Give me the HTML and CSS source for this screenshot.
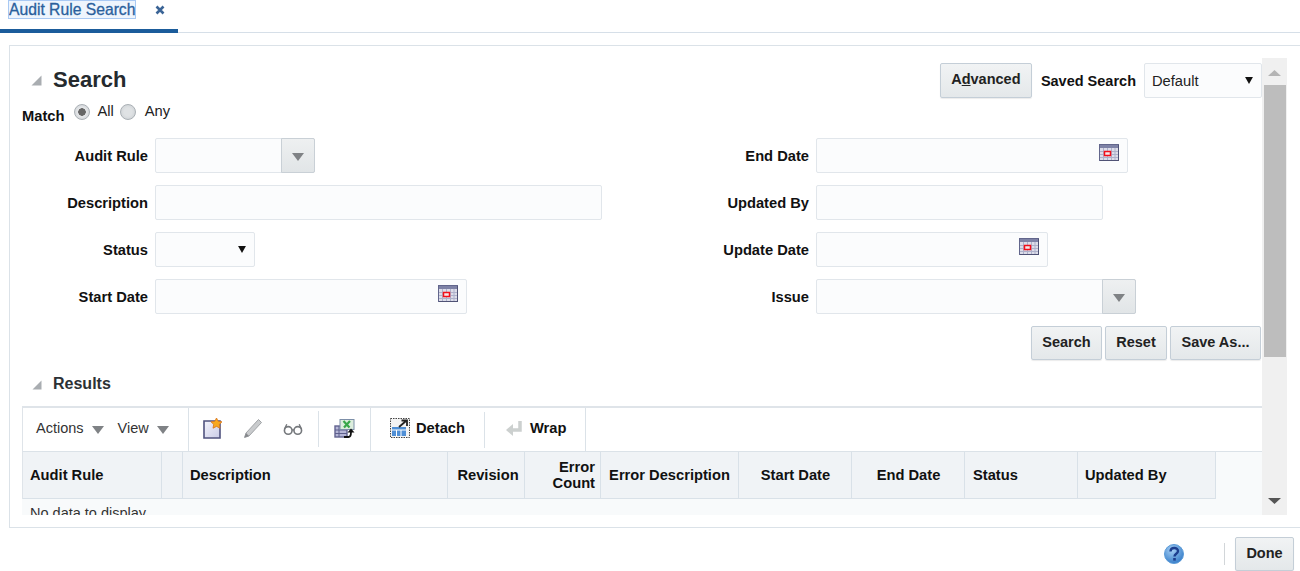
FILE: index.html
```html
<!DOCTYPE html>
<html lang="en">
<head>
<meta charset="utf-8">
<title>Audit Rule Search</title>
<link rel="stylesheet" href="styles.css">
</head>
<body>
<svg class="defs" width="0" height="0" aria-hidden="true">
  <defs>
    <symbol id="cal" viewBox="0 0 20 17">
      <rect x="0.5" y="0.5" width="19" height="16" fill="#dcdde9" stroke="#62668c"/>
      <rect x="1" y="1" width="18" height="3" fill="#7e82a6"/>
      <path d="M1 7.500h18M1 10.500h18M1 13.500h18M4.500 4v12M8.500 4v12M12.500 4v12M16 4v12" stroke="#aeb1cb" stroke-width="1"/>
      <path d="M19.500 1v16M1 16.500h19" stroke="#4f5275" stroke-width="1"/>
      <rect x="5.500" y="7.500" width="6" height="4" fill="#f7e8ea" stroke="#f20e1a" stroke-width="1.500"/>
    </symbol>
    <symbol id="down" viewBox="0 0 14 10">
      <path d="M1 1h12L7 9z" fill="#7f8285"/>
    </symbol>
  </defs>
</svg>

<header class="tabs">
  <div class="tab">
    <span class="tab-title">Audit Rule Search</span>
    <svg class="tab-close" width="10" height="10" viewBox="0 0 10 10"><path d="M1.500 1.500l7 7M8.500 1.500l-7 7" stroke="#3a6496" stroke-width="2.600"/></svg>
  </div>
</header>

<main class="panel">
  <div class="content">
    <section class="search">
      <div class="search-head">
        <svg class="disclosure big" width="11" height="11" viewBox="0 0 11 11"><path d="M10.500 0.500v10H0.500z" fill="#a9adb1"/></svg>
        <h1>Search</h1>
        <div class="head-tools">
          <button class="btn adv" type="button">A<u>d</u>vanced</button>
          <span class="lbl saved-lbl">Saved Search</span>
          <div class="field choice saved"><span>Default</span><svg width="8" height="7" viewBox="0 0 9 8"><path d="M0 0h9L4.500 8z" fill="#111"/></svg></div>
        </div>
      </div>

      <div class="match">
        <span class="lbl">Match</span>
        <span class="radio on"></span><span class="opt">All</span>
        <span class="radio"></span><span class="opt">Any</span>
      </div>

      <div class="form">
        <div class="col">
          <div class="row"><span class="lbl">Audit Rule</span>
            <div class="field combo w160"><span class="combo-btn"><svg width="14" height="10"><use href="#down"/></svg></span></div></div>
          <div class="row"><span class="lbl">Description</span><div class="field w447"></div></div>
          <div class="row"><span class="lbl">Status</span>
            <div class="field choice w100"><span></span><svg width="8" height="7" viewBox="0 0 9 8"><path d="M0 0h9L4.500 8z" fill="#111"/></svg></div></div>
          <div class="row"><span class="lbl">Start Date</span>
            <div class="field date w312"><svg width="20" height="17"><use href="#cal"/></svg></div></div>
        </div>
        <div class="col">
          <div class="row"><span class="lbl">End Date</span>
            <div class="field date w312"><svg width="20" height="17"><use href="#cal"/></svg></div></div>
          <div class="row"><span class="lbl">Updated By</span><div class="field w287"></div></div>
          <div class="row"><span class="lbl">Update Date</span>
            <div class="field date w232"><svg width="20" height="17"><use href="#cal"/></svg></div></div>
          <div class="row"><span class="lbl">Issue</span>
            <div class="field combo w320"><span class="combo-btn"><svg width="14" height="10"><use href="#down"/></svg></span></div></div>
        </div>
      </div>

      <div class="actions">
        <button class="btn b-search" type="button">Search</button>
        <button class="btn b-reset" type="button">Reset</button>
        <button class="btn b-save" type="button">Save As...</button>
      </div>
    </section>

    <section class="results">
      <div class="results-head">
        <svg class="disclosure" width="10" height="10" viewBox="0 0 10 10"><path d="M9.500 0.500v9H0.500z" fill="#a9adb1"/></svg>
        <h2>Results</h2>
      </div>
      <div class="toolbar">
        <div class="tb-group menus">
          <span class="menu">Actions<svg width="14" height="10" viewBox="0 0 14 10"><use href="#down"/></svg></span>
          <span class="menu">View<svg width="14" height="10" viewBox="0 0 14 10"><use href="#down"/></svg></span>
        </div>
        <div class="tb-group icons">
          <svg width="20" height="21" viewBox="0 0 20 21"><defs><linearGradient id="pg" x1="0" y1="0" x2="1" y2="1"><stop offset="0" stop-color="#f4f4fc"/><stop offset="1" stop-color="#c9cbe6"/></linearGradient></defs><path d="M1 3h16v17H1z" fill="url(#pg)" stroke="#50537f" stroke-width="1.600"/><path d="M13.500 0l1.700 3.300 3.800.5-2.700 2.600.7 3.800-3.500-1.800-3.500 1.800.7-3.800L8 3.800l3.800-.5z" fill="#f7a81f" stroke="#d8741a" stroke-width=".8"/></svg>
          <svg width="20" height="21" viewBox="0 0 20 21"><path d="M15.500 1.500l3 3L6 18l-4.500 1.500L3 15z" fill="#c9cbcd" stroke="#a0a3a6"/><path d="M3 15l3 3-4.500 1.500z" fill="#85888b"/></svg>
          <svg width="20" height="21" viewBox="0 0 21 21"><circle cx="5.500" cy="12.500" r="4" fill="#fff" stroke="#75787c" stroke-width="1.700"/><circle cx="15.500" cy="12.500" r="4" fill="#fff" stroke="#75787c" stroke-width="1.700"/><path d="M1.500 11l2.500-5M19.500 11L17 6M9.500 12h2" fill="none" stroke="#75787c" stroke-width="1.400"/></svg>
          <span class="tb-sep"></span>
          <svg width="21" height="21" viewBox="0 0 21 21"><rect x="1" y="8" width="12" height="11" fill="#b5b6d6" stroke="#62638f" stroke-width="1.400"/><path d="M1 12h12M1 15.500h12M5 8v11" stroke="#5d5f8c"/><rect x="6" y="1.500" width="14" height="10" fill="#dceddd" stroke="#7d8fa8"/><path d="M9.500 3l6 6.500M16 3l-6 6.500" stroke="#38a749" stroke-width="2.200"/><path d="M10 19h4.500c2 0 2.500-1.500 2.500-5" fill="none" stroke="#111" stroke-width="1.800"/><path d="M13.500 14.500h7L17 10.500z" fill="#111"/></svg>
        </div>
        <div class="tb-group tool detach">
          <svg width="20" height="20" viewBox="0 0 20 20"><rect x=".5" y=".5" width="19" height="19" fill="#f3f3f3" stroke="#444" stroke-dasharray="1.500 1"/><rect x="2" y="9" width="14" height="9" fill="#4f8fd6"/><path d="M2 12h14M6.500 12v6M11 12v6" stroke="#fff"/><path d="M9 9l7-6M11.500 2.500H17V8" fill="none" stroke="#222" stroke-width="1.800"/></svg>
          <span>Detach</span>
        </div>
        <span class="tb-inner-sep"></span>
        <div class="tb-group tool wrap">
          <svg width="16" height="16" viewBox="0 0 16 16"><path d="M14 1v9H6" fill="none" stroke="#ccd0cf" stroke-width="3.500"/><path d="M7 4v12L0 10z" fill="#ccd0cf"/></svg>
          <span>Wrap</span>
        </div>
      </div>
      <div class="thead">
        <div class="th c1">Audit Rule</div>
        <div class="th c2"></div>
        <div class="th c3">Description</div>
        <div class="th c4 ctr">Revision</div>
        <div class="th c5">Error<br>Count</div>
        <div class="th c6 ctr">Error Description</div>
        <div class="th c7 ctr">Start Date</div>
        <div class="th c7 ctr">End Date</div>
        <div class="th c7 st">Status</div>
        <div class="th c8">Updated By</div>
      </div>
      <div class="tbody">No data to display.</div>
    </section>
  </div>

  <aside class="scrollbar">
    <div class="sb-arrow"><svg width="13" height="6" viewBox="0 0 14 8" preserveAspectRatio="none"><path d="M0 8h14L7 0z" fill="#b4b4b4"/></svg></div>
    <div class="sb-thumb"></div>
    <div class="sb-track"></div>
    <div class="sb-arrow low"><svg width="13" height="6" viewBox="0 0 14 8" preserveAspectRatio="none"><path d="M0 0h14L7 8z" fill="#555"/></svg></div>
  </aside>
</main>

<footer class="foot">
  <svg class="help" width="22" height="22" viewBox="0 0 22 22">
    <defs><radialGradient id="hg" cx=".4" cy=".3" r=".8"><stop offset="0" stop-color="#a6d0f5"/><stop offset="1" stop-color="#2a74c4"/></radialGradient></defs>
    <circle cx="11" cy="11" r="9.500" fill="url(#hg)" stroke="#5b9bd8"/>
    <path d="M7.500 8.500c0-4.500 7.500-4.500 7.500-.5 0 3-3.500 2.500-3.500 5.500" fill="none" stroke="#1d3f8f" stroke-width="2.400"/>
    <rect x="10.200" y="15" width="2.600" height="2.600" fill="#1d3f8f"/>
  </svg>
  <span class="foot-sep"></span>
  <button class="btn done" type="button">Done</button>
</footer>
</body>
</html>
```

FILE: styles.css
```css
* { box-sizing: border-box; }
html, body { margin: 0; padding: 0; }
body {
  width: 1300px;
  height: 571px;
  overflow: hidden;
  background: #fff;
  color: #111;
  font-family: "Liberation Sans", Arial, sans-serif;
  font-size: 14.700px;
}
.defs { display: block; height: 0; }

.tabs { height: 33px; border-bottom: 1px solid #d6dfe8; }
.tab {
  width: 178px;
  height: 33px;
  border-bottom: 4px solid #1b5c9b;
  padding: 1px 0 0 9px;
  display: flex;
  align-items: flex-start;
  gap: 20px;
}
.tab-title {
  height: 17px;
  line-height: 18px;
  color: #2a5f9c;
  font-size: 15.700px;
  background: #eef5fd;
  outline: 1px solid #a9c9f3;
  -webkit-text-stroke: .3px #2a5f9c;
}
.tab-close { margin-top: 4px; }

.panel {
  margin: 12px 0 0 9px;
  height: 483px;
  border-top: 1px solid #dbe2e8;
  border-left: 1px solid #dbe2e8;
  border-bottom: 1px solid #dbe2e8;
  padding-top: 12px;
  display: flex;
  align-items: flex-start;
}
.content {
  width: 1252px;
  height: 457px;
  overflow: hidden;
  padding: 5px 0 0 12px;
}

.btn {
  font-family: inherit;
  font-size: 14.500px;
  font-weight: bold;
  color: #222;
  height: 35px;
  padding: 0;
  border: 1px solid #c4ced7;
  border-radius: 2px;
  background: linear-gradient(#f1f3f4, #e4e8ea);
  box-shadow: 0 1px 1px rgba(0,0,0,.08);
}

.search-head { display: flex; align-items: flex-start; height: 35px; }
.disclosure.big { margin: 12px 0 0 9px; }
h1 {
  margin: 0 0 0 11px;
  font-size: 22px;
  line-height: 34px;
  font-weight: bold;
  color: #252a2e;
}
.head-tools { margin-left: auto; display: flex; align-items: center; }
.adv { width: 92px; padding-bottom: 3px; }
.saved-lbl { margin: 0 8px 0 9px; font-size: 14.500px; }
.lbl { font-weight: bold; color: #111; white-space: nowrap; }

.field {
  height: 35px;
  background: #fbfcfd;
  border: 1px solid #e1e6eb;
  border-radius: 2px;
  display: flex;
  align-items: center;
}
.choice { justify-content: space-between; padding: 0 8px 0 7px; color: #222; }
.saved { width: 118px; }
.w160 { width: 160px; }
.w447 { width: 447px; }
.w100 { width: 100px; }
.w312 { width: 312px; }
.w287 { width: 287px; }
.w232 { width: 232px; }
.w320 { width: 320px; }
.date { justify-content: flex-end; padding-right: 8px; }
.date svg { margin-top: -7px; }
.combo { justify-content: flex-end; }
.combo-btn {
  width: 34px;
  height: 35px;
  margin: 0 -1px 0 0;
  border: 1px solid #c9d0d6;
  border-radius: 0 2px 2px 0;
  background: linear-gradient(#eef0f1, #e1e5e7);
  display: flex;
  align-items: center;
  justify-content: center;
}
.combo-btn svg { margin-top: 3px; }

.match {
  display: flex;
  align-items: flex-start;
  height: 35px;
  margin-top: 5px;
}
.match .lbl { margin-top: 5px; margin-right: 10px; }
.radio {
  width: 16px;
  height: 16px;
  margin-top: 1px;
  border-radius: 50%;
  border: 1px solid #aab0b5;
  background: radial-gradient(circle, #dfe2e4 40%, #c8ccd0 100%);
}
.radio.on { background: radial-gradient(circle, #666 0 3.500px, #e6e8ea 4px, #c8ccd0 100%); }
.opt { margin: 0 6px 0 7px; color: #222; line-height: 16px; }
.opt:last-child { margin-left: 9px; }

.form { display: flex; }
.col { flex: none; width: 661px; display: flex; flex-direction: column; gap: 12px; }
.row { display: flex; align-items: center; gap: 7px; }
.row .lbl { width: 126px; text-align: right; }

.actions { display: flex; justify-content: flex-end; gap: 3px; margin-top: 12px; padding-right: 1px; }
.actions .btn { padding-bottom: 2px; }
.b-search { width: 71px; height: 34px; }
.b-reset { width: 62px; height: 34px; }
.b-save { width: 91px; height: 34px; }

.results-head { display: flex; align-items: center; height: 20px; margin-top: 14px; }
.disclosure { margin-left: 10px; margin-top: 1px; }
h2 { margin: 0 0 0 11px; font-size: 16px; font-weight: bold; color: #2c3135; line-height: 20px; }

.toolbar {
  margin-top: 12px;
  height: 46px;
  width: 1240px;
  border-top: 2px solid #dfe4e9;
  border-bottom: 1px solid #dbe2e8;
  border-left: 1px solid #dfe4e9;
  display: flex;
  align-items: stretch;
}
.tb-group { display: flex; align-items: center; }
.menus { width: 166px; padding: 0 0 3px 13px; gap: 13px; border-right: 1px solid #dbe2e8; color: #333; font-size: 14.500px; }
.menu { display: flex; align-items: center; gap: 7px; }
.menu svg { margin-top: 3px; }
.icons { width: 182px; padding: 0 0 2px 14px; border-right: 1px solid #dbe2e8; }
.icons svg { flex: none; margin-right: 20px; }
.icons svg:nth-of-type(3) { margin-right: 15px; }
.icons svg:last-child { margin: 0 0 0 15px; }
.tb-sep { width: 1px; height: 36px; background: #dbe2e8; }
.tool { font-weight: bold; color: #111; gap: 6px; font-size: 14.700px; padding-bottom: 3px; }
.detach { padding-left: 19px; width: 113px; }
.tb-inner-sep { width: 1px; height: 36px; background: #dbe2e8; align-self: center; }
.wrap { padding-left: 21px; padding-right: 19px; gap: 8px; border-right: 1px solid #dbe2e8; }

.thead {
  width: 1240px;
  height: 47px;
  display: flex;
  background: #f8fafb;
  border-left: 1px solid #dfe4e9;
}
.th {
  background: #f0f3f6;
  border-right: 1px solid #d9e1e8;
  border-bottom: 1px solid #d9e1e8;
  font-weight: bold;
  color: #111;
  padding: 0 7px 1px;
  display: flex;
  align-items: center;
}
.c1 { width: 139px; }
.c2 { width: 21px; }
.c3 { width: 265px; }
.c4 { width: 77px; padding-left: 11px; }
.c5 { width: 76px; display: block; text-align: right; line-height: 16px; padding: 7px 5px 0 0; }
.c6 { width: 138px; }
.c7 { width: 113px; }
.c8 { width: 138px; }
.ctr { justify-content: center; }
.c6.ctr { padding: 0 0 1px; }
.c7.ctr { padding: 0 0 1px 1px; }
.st { padding-left: 8px; }
.tbody {
  width: 1240px;
  height: 40px;
  padding: 6px 0 0 8px;
  background: #f8fafb;
  color: #333;
  line-height: 17px;
  font-size: 14.500px;
}

.scrollbar {
  width: 25px;
  height: 457px;
  background: #f0f0f0;
  display: flex;
  flex-direction: column;
  align-items: stretch;
}
.sb-arrow { height: 27px; display: flex; justify-content: center; align-items: flex-start; padding-top: 12px; }
.sb-arrow.low { height: 26px; padding-top: 9px; }
.sb-thumb { height: 272px; margin: 0 1px 0 2px; background: #bdbdbd; }
.sb-track { flex: 1; }

.foot {
  display: flex;
  align-items: center;
  justify-content: flex-end;
  height: 34px;
  margin-top: 9px;
  padding-right: 6px;
}
.foot-sep { width: 1px; height: 22px; background: #d2d6d9; margin: 0 10px 0 39px; }
.done { width: 59px; height: 34px; padding-bottom: 2px; }
```
